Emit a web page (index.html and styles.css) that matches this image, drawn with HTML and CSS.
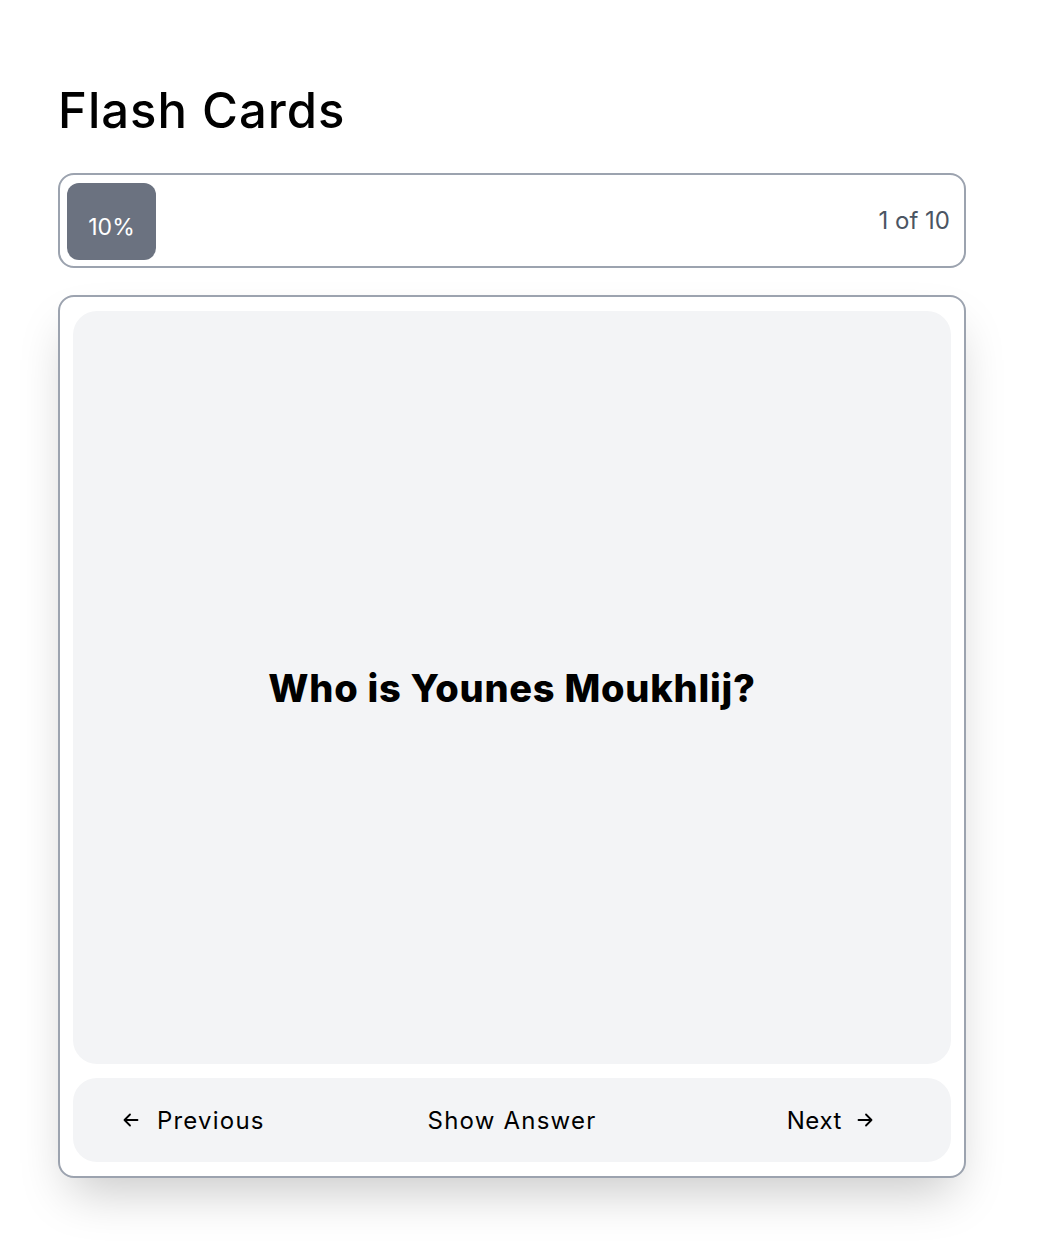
FILE: index.html
```html
<!DOCTYPE html>
<html lang="en">
<head>
<meta charset="utf-8">
<title>Flash Cards</title>
<link rel="stylesheet" href="styles.css">
</head>
<body>
<main class="page">
  <h1 class="title">Flash Cards</h1>
  <div class="progress">
    <div class="progress-fill" style="width: 89px;"><span>10%</span></div>
    <span class="progress-count">1 of 10</span>
  </div>
  <section class="card">
    <div class="card-face">
      <p class="question">Who is Younes Moukhlij?</p>
    </div>
    <div class="controls">
      <button class="btn btn-prev" type="button">
        <svg class="arrow" viewBox="0 0 20 20" width="20" height="20" fill="none" stroke="currentColor" stroke-width="1.8" stroke-linecap="round" stroke-linejoin="round"><path d="M16.5 10H3.5M9 4.5L3.5 10L9 15.5"/></svg>
        <span>Previous</span>
      </button>
      <button class="btn btn-show" type="button">Show Answer</button>
      <button class="btn btn-next" type="button">
        <span>Next</span>
        <svg class="arrow" viewBox="0 0 20 20" width="20" height="20" fill="none" stroke="currentColor" stroke-width="1.8" stroke-linecap="round" stroke-linejoin="round"><path d="M3.5 10H16.5M11 4.5L16.5 10L11 15.5"/></svg>
      </button>
    </div>
  </section>
</main>
</body>
</html>
```
FILE: styles.css
```css
* { box-sizing: border-box; }
html, body { margin: 0; padding: 0; background: #fff; }
body {
  font-family: Inter, "Open Sans", "Liberation Sans", sans-serif;
  color: #000;
}
.page {
  width: 908px;
  margin-left: 58px;
  padding-top: 84px;
  padding-bottom: 80px;
}
.title {
  margin: 0 0 35px;
  font-size: 49px;
  line-height: 54px;
  font-weight: 500;
  letter-spacing: 1px;
}
.progress {
  height: 95px;
  border: 2px solid #9ca3af;
  border-radius: 16px;
  padding: 8px 14px 6px 7px;
  display: flex;
  align-items: stretch;
  justify-content: space-between;
}
.progress-fill {
  background: #6b7280;
  border-radius: 12px;
  color: #fff;
  font-size: 23px;
  display: flex;
  justify-content: center;
  align-items: flex-start;
  padding-top: 30px;
  line-height: 28px;
}
.progress-count {
  align-self: flex-start;
  margin-top: 24px;
  font-size: 24px;
  line-height: 28px;
  color: #4b5563;
}
.card {
  margin-top: 27px;
  border: 2px solid #9ca3af;
  border-radius: 16px;
  padding: 14px 13px;
  display: flex;
  flex-direction: column;
  gap: 14px;
  background: #fff;
  box-shadow: 0 25px 50px -12px rgba(0, 0, 0, 0.22);
}
.card-face {
  height: 753px;
  background: #f3f4f6;
  border-radius: 24px;
  display: flex;
  align-items: center;
  justify-content: center;
}
.question {
  margin: 0;
  font-size: 38px;
  font-weight: 800;
  letter-spacing: 0.75px;
}
.controls {
  height: 84px;
  background: #f3f4f6;
  border-radius: 24px;
  display: grid;
  grid-template-columns: 1fr auto 1fr;
  align-items: center;
}
.btn {
  border: 0;
  background: none;
  padding: 0;
  font: inherit;
  font-size: 24px;
  letter-spacing: 1.2px;
  color: #000;
  display: flex;
  align-items: center;
  gap: 16px;
  cursor: pointer;
}
.btn-prev { justify-self: start; margin-left: 48px; }
.btn-next { justify-self: end; margin-right: 76px; gap: 13px; letter-spacing: 0.6px; }
.arrow { display: block; flex: none; }
```
